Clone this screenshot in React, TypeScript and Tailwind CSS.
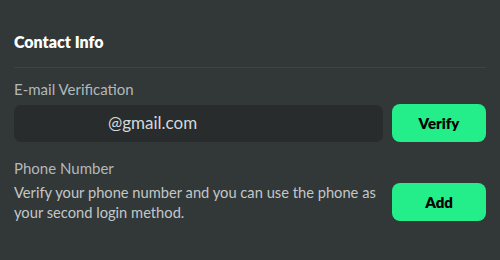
export default function App() {
  return (
    <div
      className="h-[260px] w-[500px] bg-[#323738] px-[14px] pt-[32px]"
      style={{ fontFamily: "Lato, 'Open Sans', sans-serif" }}
    >
      <h2 className="text-[16px] font-extrabold leading-[20px] text-white">Contact Info</h2>
      <div className="mt-[15px] h-px bg-[#3d4244]" />

      <div className="mt-[12px] text-[15px] leading-[18px] text-[#b3b8ba]">E-mail Verification</div>
      <div className="mt-[6px] flex items-center gap-[9px]">
        <div className="flex h-[37px] flex-1 items-center rounded-[7px] bg-[#282c2d] pl-[94px] text-[17px] text-[#d5d8d9]">
          @gmail.com
        </div>
        <button className="h-[38px] w-[94px] rounded-[8px] bg-[#24ee89] text-[15px] font-extrabold text-black">
          Verify
        </button>
      </div>

      <div className="mt-[17px] text-[15px] leading-[18px] text-[#b3b8ba]">Phone Number</div>
      <div className="mt-[5px] flex items-center gap-[9px]">
        <p className="flex-1 text-[14.7px] leading-[20px] text-[#c3c7c9]">
          Verify your phone number and you can use the phone as your second login method.
        </p>
        <button className="h-[38px] w-[94px] rounded-[8px] bg-[#24ee89] text-[15px] font-extrabold text-black">
          Add
        </button>
      </div>
    </div>
  );
}
